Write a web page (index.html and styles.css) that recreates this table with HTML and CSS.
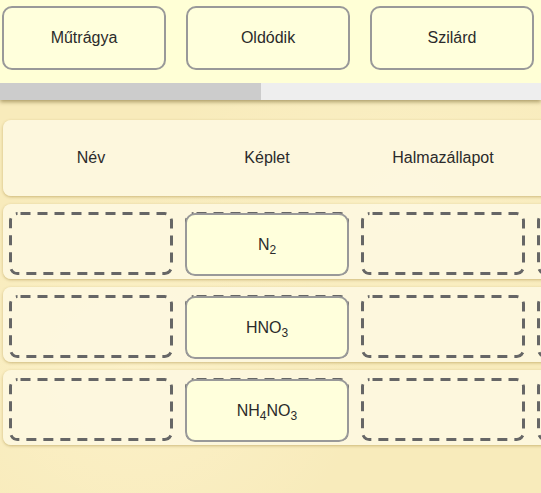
FILE: index.html
```html
<!DOCTYPE html>
<html lang="hu">
<head>
<meta charset="utf-8">
<title>Feladat</title>
<link rel="stylesheet" href="styles.css">
</head>
<body>
<div class="top">
  <div class="options">
    <div class="chip"><span>Műtrágya</span></div>
    <div class="chip"><span>Oldódik</span></div>
    <div class="chip"><span>Szilárd</span></div>
  </div>
  <div class="progress"><div class="fill" style="width:261px"></div></div>
</div>
<div class="board">
  <div class="row header">
    <div class="cell">Név</div>
    <div class="cell">Képlet</div>
    <div class="cell">Halmazállapot</div>
    <div class="cell"></div>
  </div>
  <div class="row">
    <div class="zone"></div>
    <div class="zone"><div class="chip placed"><span>N<sub>2</sub></span></div></div>
    <div class="zone"></div>
    <div class="zone"></div>
  </div>
  <div class="row">
    <div class="zone"></div>
    <div class="zone"><div class="chip placed"><span>HNO<sub>3</sub></span></div></div>
    <div class="zone"></div>
    <div class="zone"></div>
  </div>
  <div class="row">
    <div class="zone"></div>
    <div class="zone"><div class="chip placed"><span>NH<sub>4</sub>NO<sub>3</sub></span></div></div>
    <div class="zone"></div>
    <div class="zone"></div>
  </div>
</div>
</body>
</html>
```
FILE: styles.css
```css
html, body {
  margin: 0;
  padding: 0;
}
body {
  width: 541px;
  height: 493px;
  overflow: hidden;
  font-family: "Liberation Sans", Arial, sans-serif;
  font-size: 16px;
  color: #2b2b2b;
  background:
    radial-gradient(ellipse at 25% 75%, rgba(255,246,212,0.55), rgba(255,246,212,0) 40%),
    radial-gradient(ellipse at 75% 40%, rgba(255,246,212,0.4), rgba(255,246,212,0) 45%),
    #f8ebbb;
}
.top {
  position: relative;
  z-index: 2;
  background: #ffffd6;
  box-shadow: 0 2px 4px rgba(80,60,0,0.45);
}
.options {
  display: flex;
  gap: 20px;
  padding: 6px 0 0 2px;
  height: 83px;
  box-sizing: border-box;
}
.chip {
  width: 164px;
  height: 64px;
  box-sizing: border-box;
  border: 2px solid #999;
  border-radius: 10px;
  background: #ffffdc;
  display: flex;
  align-items: center;
  justify-content: center;
}
.progress {
  height: 17px;
  background: #eeeeee;
}
.fill {
  height: 100%;
  background: #cccccc;
}
.board {
  padding: 20px 0 0 3px;
  display: flex;
  flex-direction: column;
  gap: 8px;
}
.row {
  width: 720px;
  height: 75px;
  box-sizing: border-box;
  padding: 8px 0 0 6px;
  display: flex;
  gap: 12px;
  background: rgba(253,247,224,0.92);
  border-radius: 8px;
  box-shadow: 0 1px 3px rgba(150,120,40,0.45);
}
.row.header {
  height: 76px;
  padding: 0 0 0 6px;
}
.cell {
  width: 164px;
  flex: none;
  display: flex;
  align-items: center;
  justify-content: center;
}
.zone {
  position: relative;
  width: 164px;
  height: 63px;
  flex: none;
  box-sizing: border-box;
  border-radius: 8px;
  background-image: url("data:image/svg+xml,%3Csvg xmlns='http://www.w3.org/2000/svg' width='164' height='63'%3E%3Crect x='1.5' y='1.5' width='161' height='60' rx='7' fill='none' stroke='%23666' stroke-width='3' stroke-dasharray='10 7' stroke-dashoffset='-3'/%3E%3C/svg%3E");
  background-repeat: no-repeat;
}
.chip.placed {
  position: absolute;
  left: 0;
  top: 1px;
  height: 63px;
}
sub {
  font-size: 12px;
  vertical-align: -4px;
  line-height: 0;
}
```
